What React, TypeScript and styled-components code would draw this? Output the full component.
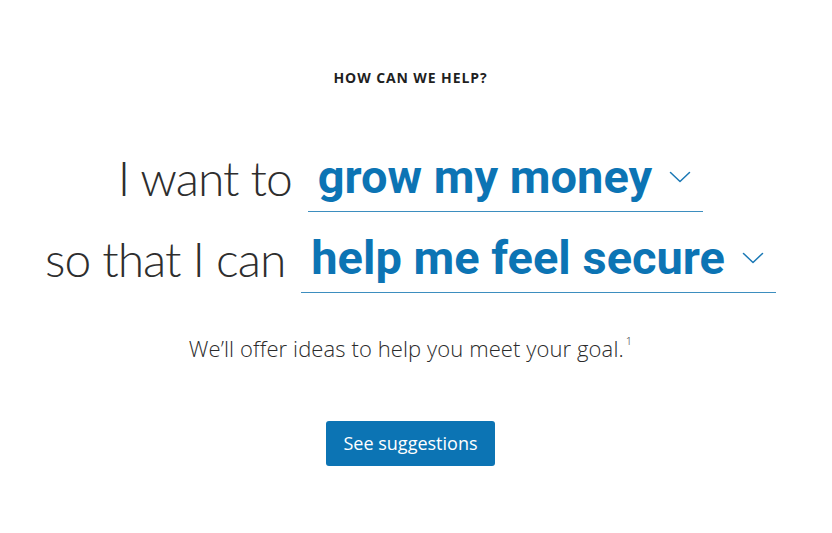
import React from 'react';
import styled, { createGlobalStyle } from 'styled-components';

const GlobalStyle = createGlobalStyle`
  html, body {
    margin: 0;
    padding: 0;
    background: #ffffff;
  }
  body {
    font-family: "Open Sans", "Liberation Sans", sans-serif;
    color: #222;
  }
`;

const ChevronDown: React.FC = () => (
  <svg width="22" height="12" viewBox="0 0 22 12" fill="none">
    <path d="M1.5 1.5 L11 10.5 L20.5 1.5" stroke="#1a78b5" strokeWidth="1.5" strokeLinecap="round" strokeLinejoin="round" />
  </svg>
);

const GoalSelect: React.FC<{ value: string }> = ({ value }) => (
  <SelectBox>
    <SelectValue>{value}</SelectValue>
    <ChevronDown />
  </SelectBox>
);

const App: React.FC = () => {
  return (
    <>
      <GlobalStyle />
      <Page>
        <Eyebrow>How can we help?</Eyebrow>

        <Sentence>
          <Row>
            <Label>I want to</Label>
            <GoalSelect value="grow my money" />
          </Row>
          <Row>
            <Label>so that I can</Label>
            <GoalSelect value="help me feel secure" />
          </Row>
        </Sentence>

        <Note>
          We’ll offer ideas to help you meet your goal.<sup>1</sup>
        </Note>

        <PrimaryButton type="button">See suggestions</PrimaryButton>
      </Page>
    </>
  );
};

const Page = styled.main`
  display: flex;
  flex-direction: column;
  align-items: center;
  padding: 68px 11px 0 0;
  min-height: 533px;
  box-sizing: border-box;
`;

const Eyebrow = styled.h2`
  margin: 0;
  font-family: "Open Sans", sans-serif;
  font-size: 14px;
  line-height: 19px;
  font-weight: 700;
  letter-spacing: 0.9px;
  text-transform: uppercase;
  color: #1f1f1f;
`;

const Sentence = styled.div`
  display: flex;
  flex-direction: column;
  gap: 22px;
  margin-top: 66px;
`;

const Row = styled.div`
  display: flex;
  justify-content: center;
  align-items: flex-end;
  gap: 16px;
`;

const Label = styled.span`
  font-family: "Lato", sans-serif;
  font-weight: 300;
  font-size: 48px;
  line-height: 48px;
  letter-spacing: -1px;
  color: #2e2e2e;
  padding-bottom: 10.5px;
`;

const SelectBox = styled.div`
  display: flex;
  align-items: center;
  gap: 17px;
  padding: 0 12px 10px 10px;
  border-bottom: 1.5px solid #3d8ebf;
`;

const SelectValue = styled.span`
  font-family: "Roboto", sans-serif;
  font-weight: 700;
  font-size: 47px;
  line-height: 48px;
  color: #0c74b4;
`;

const Note = styled.p`
  margin: 40px 0 0;
  font-family: "Open Sans", sans-serif;
  font-weight: 300;
  font-size: 22px;
  line-height: 30px;
  letter-spacing: 0.1px;
  color: #2b2b2b;

  sup {
    font-size: 11px;
    margin-left: 2px;
    vertical-align: 12px;
    line-height: 0;
  }
`;

const PrimaryButton = styled.button`
  margin-top: 57.5px;
  width: 169px;
  height: 45px;
  border: none;
  border-radius: 3px;
  background: #0c74b4;
  color: #fff;
  font-family: "Open Sans", sans-serif;
  font-size: 18px;
  font-weight: 400;
  cursor: pointer;
`;

export default App;
